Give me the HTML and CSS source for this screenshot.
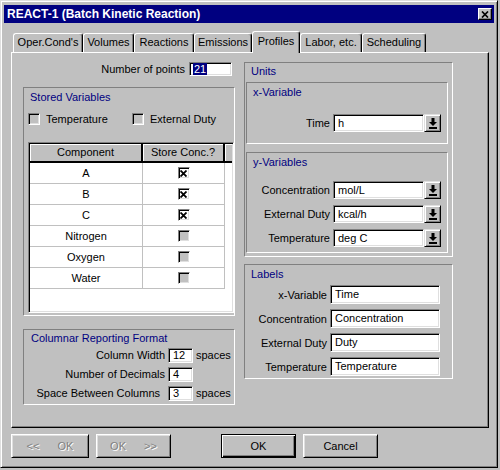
FILE: index.html
```html
<!DOCTYPE html>
<html lang="en">
<head>
    <meta charset="UTF-8">
    <title>REACT-1 (Batch Kinetic Reaction)</title>
    <link rel="stylesheet" href="styles.css">
</head>
<body>
    <div class="window">
        <div class="titlebar">
            <span class="title">REACT-1 (Batch Kinetic Reaction)</span>
            <span class="close-btn">
                <svg width="8" height="7" viewBox="0 0 8 7"><path d="M1 0.5L7 6.5M7 0.5L1 6.5" stroke="#000" stroke-width="1.7"/></svg>
            </span>
        </div>

        <div class="content">
            <div class="tabs">
                <div class="tab tab-oper">Oper.Cond's</div>
                <div class="tab tab-vol">Volumes</div>
                <div class="tab tab-react">Reactions</div>
                <div class="tab tab-emis">Emissions</div>
                <div class="tab tab-prof active">Profiles</div>
                <div class="tab tab-labor">Labor, etc.</div>
                <div class="tab tab-sched">Scheduling</div>
            </div>

            <div class="panel">
                <!-- left column -->
                <div class="col-left">
                    <div class="points-row">
                        <span>Number of points</span>
                        <span class="field field-points"><span class="sel">21</span></span>
                    </div>

                    <div class="group stored">
                        <div class="group-title">Stored Variables</div>
                        <div class="check-row">
                            <span class="check-item check-item-wide"><span class="cb"></span>Temperature</span>
                            <span class="check-item"><span class="cb"></span>External Duty</span>
                        </div>

                        <div class="grid">
                            <div class="grid-head">
                                <div class="hcell c1">Component</div>
                                <div class="hcell c2">Store Conc.?</div>
                                <div class="hcell c3"></div>
                            </div>
                            <div class="grid-row">
                                <div class="cell c1">A</div>
                                <div class="cell c2"><span class="cb cb-on"><svg width="7" height="7" viewBox="0 0 7 7"><path d="M0.5 0.5L6.5 6.5M6.5 0.5L0.5 6.5" stroke="#000" stroke-width="1.8"/></svg></span></div>
                            </div>
                            <div class="grid-row">
                                <div class="cell c1">B</div>
                                <div class="cell c2"><span class="cb cb-on"><svg width="7" height="7" viewBox="0 0 7 7"><path d="M0.5 0.5L6.5 6.5M6.5 0.5L0.5 6.5" stroke="#000" stroke-width="1.8"/></svg></span></div>
                            </div>
                            <div class="grid-row">
                                <div class="cell c1">C</div>
                                <div class="cell c2"><span class="cb cb-on"><svg width="7" height="7" viewBox="0 0 7 7"><path d="M0.5 0.5L6.5 6.5M6.5 0.5L0.5 6.5" stroke="#000" stroke-width="1.8"/></svg></span></div>
                            </div>
                            <div class="grid-row">
                                <div class="cell c1">Nitrogen</div>
                                <div class="cell c2"><span class="cb cb-cell"></span></div>
                            </div>
                            <div class="grid-row">
                                <div class="cell c1">Oxygen</div>
                                <div class="cell c2"><span class="cb cb-cell"></span></div>
                            </div>
                            <div class="grid-row">
                                <div class="cell c1">Water</div>
                                <div class="cell c2"><span class="cb cb-cell"></span></div>
                            </div>
                        </div>
                    </div>

                    <div class="group fmt">
                        <div class="group-title">Columnar Reporting Format</div>
                        <div class="fmt-grid">
                            <span class="fmt-label">Column Width</span>
                            <span class="field field-small">12</span>
                            <span>spaces</span>
                            <span class="fmt-label">Number of Decimals</span>
                            <span class="field field-small">4</span>
                            <span></span>
                            <span class="fmt-label fmt-label-pad">Space Between Columns</span>
                            <span class="field field-small">3</span>
                            <span>spaces</span>
                        </div>
                    </div>
                </div>

                <!-- right column -->
                <div class="col-right">
                    <div class="group units">
                        <div class="group-title">Units</div>

                        <div class="group xvar">
                            <div class="group-title">x-Variable</div>
                            <div class="combo-list xvar-list">
                                <div class="combo-row">
                                    <span class="combo-label">Time</span>
                                    <span class="field field-combo">h</span>
                                    <span class="drop-btn"><svg width="8" height="11" viewBox="0 0 8 11"><rect x="2.5" y="0" width="3" height="4"/><path d="M0 4h8L4 8z"/><rect x="0" y="9" width="8" height="2"/></svg></span>
                                </div>
                            </div>
                        </div>

                        <div class="group yvar">
                            <div class="group-title">y-Variables</div>
                            <div class="combo-list yvar-list">
                                <div class="combo-row">
                                    <span class="combo-label">Concentration</span>
                                    <span class="field field-combo">mol/L</span>
                                    <span class="drop-btn"><svg width="8" height="11" viewBox="0 0 8 11"><rect x="2.5" y="0" width="3" height="4"/><path d="M0 4h8L4 8z"/><rect x="0" y="9" width="8" height="2"/></svg></span>
                                </div>
                                <div class="combo-row">
                                    <span class="combo-label">External Duty</span>
                                    <span class="field field-combo">kcal/h</span>
                                    <span class="drop-btn"><svg width="8" height="11" viewBox="0 0 8 11"><rect x="2.5" y="0" width="3" height="4"/><path d="M0 4h8L4 8z"/><rect x="0" y="9" width="8" height="2"/></svg></span>
                                </div>
                                <div class="combo-row">
                                    <span class="combo-label">Temperature</span>
                                    <span class="field field-combo">deg C</span>
                                    <span class="drop-btn"><svg width="8" height="11" viewBox="0 0 8 11"><rect x="2.5" y="0" width="3" height="4"/><path d="M0 4h8L4 8z"/><rect x="0" y="9" width="8" height="2"/></svg></span>
                                </div>
                            </div>
                        </div>
                    </div>

                    <div class="group labels">
                        <div class="group-title">Labels</div>
                        <div class="label-list">
                            <div class="label-row"><span class="label-name">x-Variable</span><span class="field field-label">Time</span></div>
                            <div class="label-row"><span class="label-name">Concentration</span><span class="field field-label">Concentration</span></div>
                            <div class="label-row"><span class="label-name">External Duty</span><span class="field field-label">Duty</span></div>
                            <div class="label-row"><span class="label-name">Temperature</span><span class="field field-label">Temperature</span></div>
                        </div>
                    </div>
                </div>
            </div>

            <div class="buttons">
                <button class="btn btn-prev is-disabled"><span>&lt;&lt;</span><span>OK</span></button>
                <button class="btn is-disabled"><span>OK</span><span>&gt;&gt;</span></button>
                <button class="btn btn-default">OK</button>
                <button class="btn">Cancel</button>
            </div>
        </div>
    </div>
</body>
</html>
```

FILE: styles.css
```css
* {
    margin: 0;
    padding: 0;
    box-sizing: border-box;
}

body {
    background: #c0c0c0;
    font-family: "Liberation Sans", Arial, sans-serif;
    font-size: 11px;
    color: #000;
}

/* Window frame */
.window {
    width: 498px;
    height: 468px;
    padding: 4px 3px 3px;
    background: #c0c0c0;
    border: 1px solid;
    border-color: #dfdfdf #000 #000 #dfdfdf;
    box-shadow: inset 1px 1px #fff, inset -1px -1px #808080;
    display: flex;
    flex-direction: column;
}

.titlebar {
    height: 18px;
    background: #000080;
    color: #fff;
    display: flex;
    align-items: center;
    justify-content: space-between;
    padding: 0 2px 0 3px;
    font-size: 12px;
    font-weight: bold;
}

.close-btn {
    width: 14px;
    height: 12px;
    background: #c0c0c0;
    border: 1px solid;
    border-color: #fff #000 #000 #fff;
    box-shadow: inset -1px -1px #808080;
    display: flex;
    align-items: center;
    justify-content: center;
}

.content {
    padding: 8px 5px 0 7px;
}

/* Tabs */
.tabs {
    display: flex;
    align-items: flex-end;
    height: 21px;
    padding-left: 2px;
    position: relative;
    z-index: 2;
}

.tab {
    height: 19px;
    line-height: 17px;
    text-align: center;
    background: #c0c0c0;
    border: 1px solid;
    border-bottom: none;
    border-color: #fff #000 #000 #fff;
    border-radius: 3px 3px 0 0;
    box-shadow: inset -1px 0 #808080;
}

.tab.active {
    height: 22px;
    margin-bottom: -1px;
    line-height: 19px;
}

.tab-oper { width: 70px; }
.tab-vol { width: 51px; }
.tab-react { width: 60px; }
.tab-emis { width: 58px; }
.tab-prof { width: 48px; }
.tab-labor { width: 62px; }
.tab-sched { width: 64px; }

/* Tab page */
.panel {
    height: 376px;
    display: flex;
    gap: 9px;
    padding: 9px 0 0 11px;
    border: 1px solid;
    border-color: #fff #000 #000 #fff;
    box-shadow: inset -1px -1px #808080;
}

.col-left {
    width: 212px;
}

.col-right {
    width: 209px;
}

/* Group boxes */
.group {
    border: 1px solid;
    border-color: #808080 #fff #fff #808080;
}

.group-title {
    color: #000080;
    line-height: 13px;
    padding-left: 6px;
}

/* Inputs */
.field {
    display: block;
    background: #fff;
    border: 1px solid;
    border-color: #808080 #fff #fff #808080;
    box-shadow: inset 1px 1px #000, inset -1px -1px #dfdfdf;
    white-space: nowrap;
    overflow: hidden;
}

.field-points {
    width: 43px;
    height: 14px;
    line-height: 12px;
    padding-left: 3px;
}

.sel {
    background: #000080;
    color: #fff;
    padding: 0 1px;
}

.field-small {
    width: 25px;
    height: 15px;
    line-height: 13px;
    padding-left: 4px;
}

.field-combo {
    height: 18px;
    line-height: 16px;
    padding-left: 4px;
}

.field-label {
    width: 110px;
    height: 19px;
    line-height: 17px;
    padding-left: 4px;
}

/* Number of points */
.points-row {
    height: 14px;
    display: flex;
    align-items: center;
    justify-content: flex-end;
    gap: 4px;
    padding-right: 3px;
}

/* Stored variables */
.stored {
    height: 229px;
    margin-top: 11px;
    padding: 3px 0 0 4px;
}

.stored .group-title {
    margin-left: -4px;
}

.check-row {
    display: flex;
    height: 12px;
    margin-top: 9px;
}

.check-item {
    display: flex;
    align-items: center;
    gap: 6px;
}

.check-item-wide {
    width: 104px;
}

.cb {
    width: 12px;
    height: 12px;
    background: #c0c0c0;
    border: 1px solid;
    border-color: #808080 #fff #fff #808080;
    box-shadow: inset 1px 1px #000, inset -1px -1px #dfdfdf;
    display: flex;
    align-items: center;
    justify-content: center;
}

.cb-on {
    background: #fff;
}

/* Component grid */
.grid {
    width: 206px;
    height: 171px;
    margin-top: 17px;
    padding: 1px;
    background: #fff;
    border: 1px solid;
    border-color: #808080 #fff #fff #808080;
    box-shadow: inset 1px 1px #000, inset -1px -1px #dfdfdf;
}

.grid-head {
    display: flex;
    height: 19px;
    border-bottom: 2px solid #000;
}

.hcell {
    background: #c0c0c0;
    box-shadow: inset 1px 1px #fff;
    line-height: 17px;
    text-align: center;
}

.hcell.c1,
.hcell.c2 {
    border-right: 2px solid #000;
}

.hcell.c3 {
    flex: 1;
}

.c1 {
    width: 113px;
}

.c2 {
    width: 82px;
}

.grid-row {
    display: flex;
    height: 21px;
}

.cell {
    border-right: 1px solid #c0c0c0;
    border-bottom: 1px solid #c0c0c0;
    line-height: 20px;
    text-align: center;
    display: flex;
    align-items: center;
    justify-content: center;
}

/* Columnar format */
.fmt {
    height: 76px;
    margin-top: 13px;
    padding-top: 2px;
}

.fmt .group-title {
    padding-left: 7px;
}

.fmt-grid {
    display: grid;
    grid-template-columns: 141px 25px auto;
    grid-auto-rows: 15px;
    column-gap: 3px;
    row-gap: 4px;
    margin-top: 3px;
    line-height: 15px;
}

.fmt-label {
    text-align: right;
}

.fmt-label-pad {
    padding-right: 5px;
}

/* Units */
.units {
    height: 195px;
    padding: 2px 4px 0 1px;
}

.units .group-title {
    margin-left: -1px;
}

.units .group .group-title {
    margin-left: 0;
}

.xvar {
    height: 62px;
    margin-top: 4px;
    padding: 3px 6px 0 0;
}

.yvar {
    height: 101px;
    margin-top: 8px;
    padding: 3px 6px 0 0;
}

.combo-list {
    display: flex;
    flex-direction: column;
    gap: 6px;
}

.xvar-list {
    margin-top: 15px;
}

.yvar-list {
    margin-top: 12px;
}

.combo-row {
    display: grid;
    grid-template-columns: 1fr 91px 17px;
    height: 18px;
}

.combo-label {
    text-align: right;
    line-height: 18px;
    padding-right: 3px;
}

.drop-btn {
    background: #c0c0c0;
    border: 1px solid;
    border-color: #dfdfdf #000 #000 #dfdfdf;
    box-shadow: inset 1px 1px #fff, inset -1px -1px #808080;
    display: flex;
    align-items: center;
    justify-content: center;
}

/* Labels */
.labels {
    height: 115px;
    margin-top: 7px;
    padding: 3px 12px 0 0;
}

.label-list {
    display: flex;
    flex-direction: column;
    gap: 5px;
    margin-top: 4px;
}

.label-row {
    display: flex;
    justify-content: flex-end;
    align-items: center;
    gap: 3px;
    height: 19px;
}

/* Dialog buttons */
.buttons {
    display: flex;
    gap: 7px;
    margin-top: 6px;
}

.btn {
    width: 75px;
    height: 24px;
    font-family: inherit;
    font-size: 11px;
    color: #000;
    background: #c0c0c0;
    border: 1px solid;
    border-color: #fff #000 #000 #fff;
    box-shadow: inset 1px 1px #dfdfdf, inset -1px -1px #808080;
    display: flex;
    align-items: center;
    justify-content: center;
}

.btn-prev {
    width: 78px;
}

.is-disabled {
    gap: 18px;
    color: #808080;
    text-shadow: 1px 1px #fff;
}

.btn-default {
    margin-left: 43px;
    border-color: #000;
    box-shadow: inset 1px 1px #fff, inset -1px -1px #000, inset -2px -2px #808080;
}
```
